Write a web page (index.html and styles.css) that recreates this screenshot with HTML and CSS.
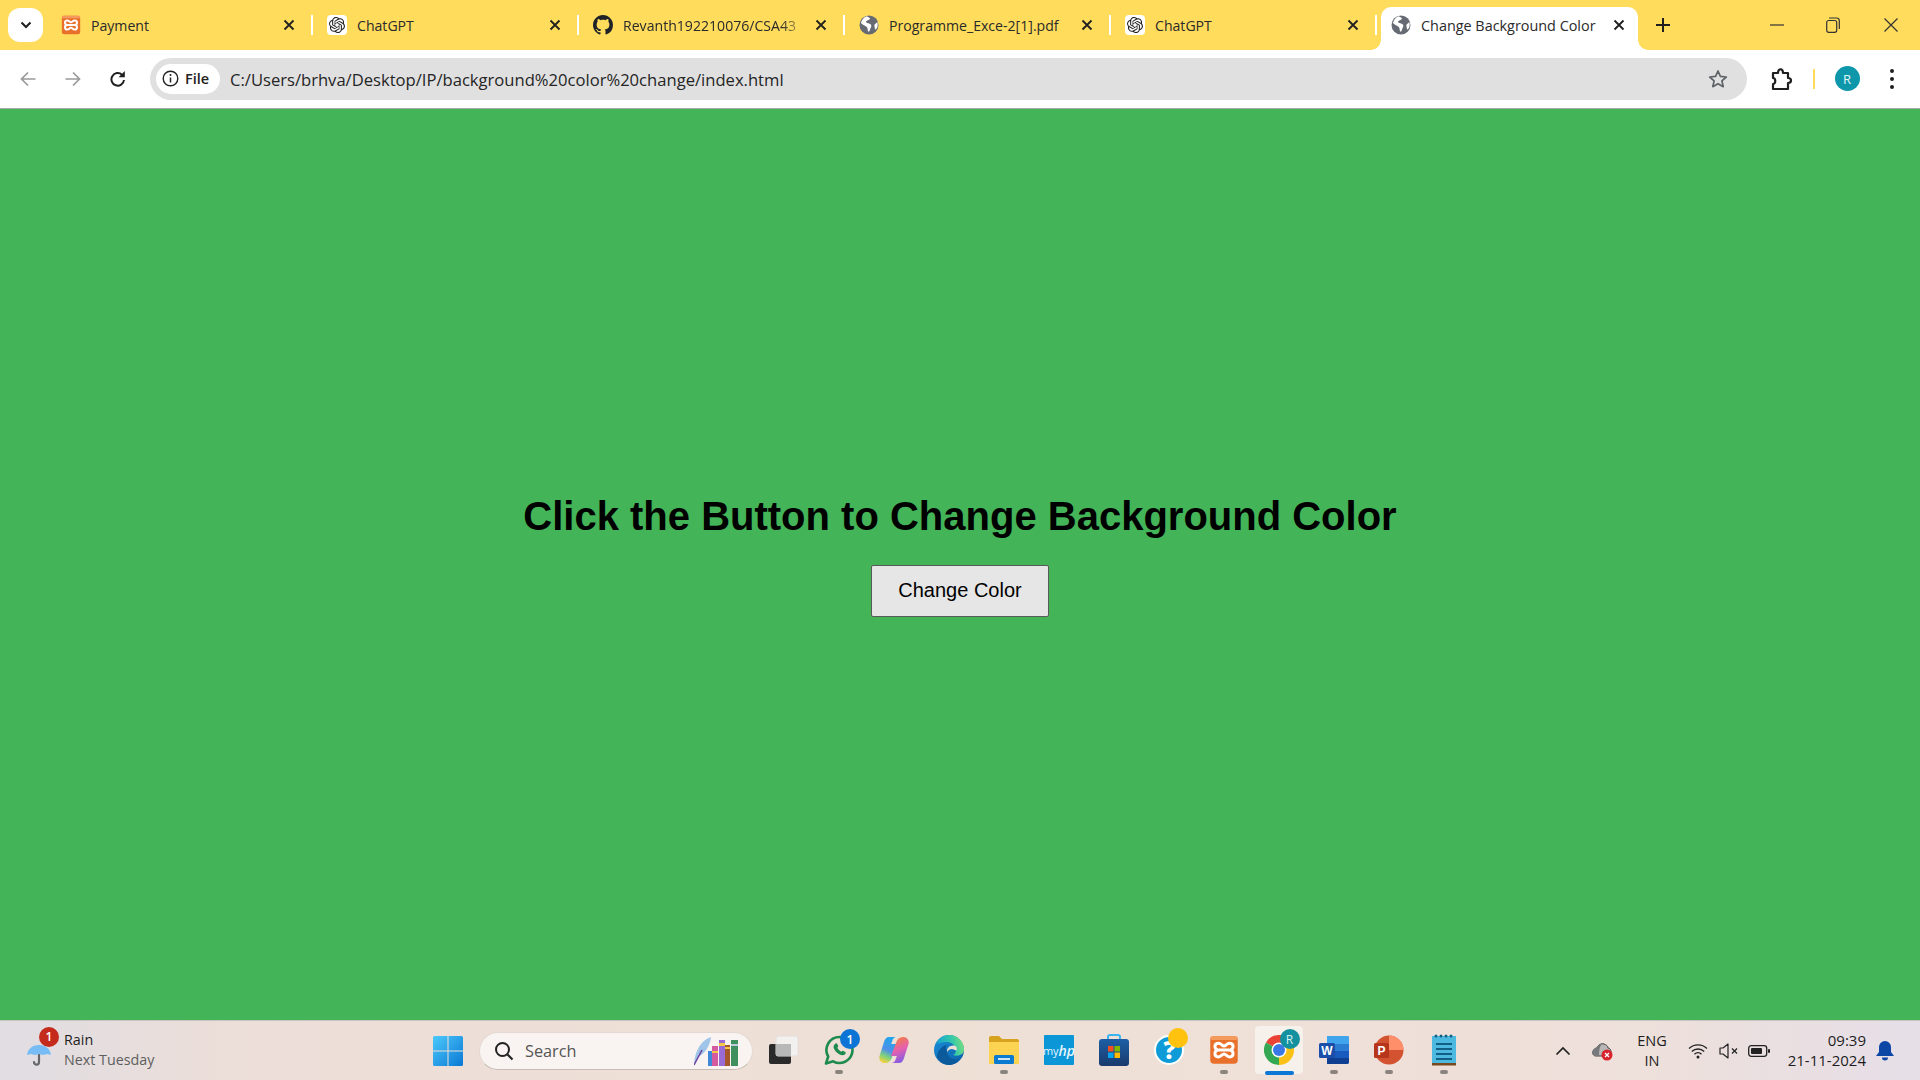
FILE: index.html
```html
<!DOCTYPE html>
<html lang="en">
<head>
<meta charset="utf-8">
<title>Change Background Color</title>
<link rel="stylesheet" href="styles.css">
</head>
<body>
<svg class="defs" width="0" height="0" aria-hidden="true">
  <defs>
    <symbol id="xampp" viewBox="0 0 24 24">
      <rect x="1" y="1" width="22" height="22" rx="3" fill="#e8702a"/>
      <rect x="1" y="1" width="22" height="3" rx="1.500" fill="#f59a5f"/>
      <path d="M7.500 6.500c-3.600 0-3.600 5-.3 5.500-3.300.5-3.300 5.500.3 5.500 2.300 0 3-2.300 4.500-2.300s2.200 2.300 4.500 2.300c3.600 0 3.600-5 .3-5.500 3.300-.5 3.300-5.500-.3-5.500-2.300 0-3 2.300-4.500 2.300s-2.200-2.300-4.500-2.300zM8 12h8" fill="none" stroke="#fff" stroke-width="2.400" stroke-linejoin="round"/>
    </symbol>
    <symbol id="openai" viewBox="0 0 24 24">
      <path fill="#222" d="M22.2819 9.8211a5.9847 5.9847 0 0 0-.5157-4.9108 6.0462 6.0462 0 0 0-6.5098-2.9A6.0651 6.0651 0 0 0 4.9807 4.1818a5.9847 5.9847 0 0 0-3.9977 2.9 6.0462 6.0462 0 0 0 .7427 7.0966 5.98 5.98 0 0 0 .511 4.9107 6.051 6.051 0 0 0 6.5146 2.9001A5.9847 5.9847 0 0 0 13.2599 24a6.0557 6.0557 0 0 0 5.7718-4.2058 5.9894 5.9894 0 0 0 3.9977-2.9001 6.0557 6.0557 0 0 0-.7475-7.0729zm-9.022 12.6081a4.4755 4.4755 0 0 1-2.8764-1.0408l.1419-.0804 4.7783-2.7582a.7948.7948 0 0 0 .3927-.6813v-6.7369l2.02 1.1686a.071.071 0 0 1 .038.052v5.5826a4.504 4.504 0 0 1-4.4945 4.4944zm-9.6607-4.1254a4.4708 4.4708 0 0 1-.5346-3.0137l.142.0852 4.783 2.7582a.7712.7712 0 0 0 .7806 0l5.8428-3.3685v2.3324a.0804.0804 0 0 1-.0332.0615L9.74 19.9502a4.4992 4.4992 0 0 1-6.1408-1.6464zM2.3408 7.8956a4.485 4.485 0 0 1 2.3655-1.9728V11.6a.7664.7664 0 0 0 .3879.6765l5.8144 3.3543-2.0201 1.1685a.0757.0757 0 0 1-.071 0l-4.8303-2.7865A4.504 4.504 0 0 1 2.3408 7.872zm16.5963 3.8558L13.1038 8.364 15.1192 7.2a.0757.0757 0 0 1 .071 0l4.8303 2.7913a4.4944 4.4944 0 0 1-.6765 8.1042v-5.6772a.79.79 0 0 0-.407-.667zm2.0107-3.0231l-.142-.0852-4.7735-2.7818a.7759.7759 0 0 0-.7854 0L9.409 9.2297V6.8974a.0662.0662 0 0 1 .0284-.0615l4.8303-2.7866a4.4992 4.4992 0 0 1 6.6802 4.66zM8.3065 12.863l-2.02-1.1638a.0804.0804 0 0 1-.038-.0567V6.0742a4.4992 4.4992 0 0 1 7.3757-3.4537l-.142.0805L8.704 5.459a.7948.7948 0 0 0-.3927.6813zm1.0976-2.3654l2.602-1.4998 2.6069 1.4998v2.9994l-2.5974 1.4997-2.6067-1.4997Z"/>
    </symbol>
    <symbol id="globe" viewBox="0 0 20 20">
      <circle cx="10" cy="10" r="9.500" fill="#666b73"/>
      <path d="M7.600 1.200c1.200 1 2.800 1 3.300 2 .5 1-1.300 1.800-2.500 2.300-1 .4-1.800 1.100-1 2 .9 1 3 .7 4.200 1.800 1.200 1.100.8 2.600 0 3.700-.7 1-.4 2.500-1.700 3.800-.8-.2-1.300-1.500-1.300-2.800 0-1.300-.6-2-1.900-2.800C5.300 10.400 3 9.500 2 8.100c.4-3 2.800-6 5.600-6.900zM15.700 9.300c1-.7 2-1.700 2.600-2.400.5 1.700.7 3.600-.2 5.800-.5.800-1.200 1.700-1.800 1.900-.8-1.500-1.100-4.100-.6-5.300z" fill="#fff"/>
    </symbol>
    <symbol id="close" viewBox="0 0 12 12">
      <path d="M1.500 1.500l9 9M10.500 1.500l-9 9" stroke="#1f1f1f" stroke-width="1.800" fill="none"/>
    </symbol>
    <linearGradient id="edgeA" x1="0" y1="0" x2="1" y2="1"><stop offset="0" stop-color="#1a8fd8"/><stop offset="1" stop-color="#0b5fa8"/></linearGradient>
    <linearGradient id="edgeB" x1="0" y1=".5" x2="1" y2=".3"><stop offset="0" stop-color="#14a0d8"/><stop offset=".6" stop-color="#35c8a8"/><stop offset="1" stop-color="#7fe07a"/></linearGradient>
    <linearGradient id="win" x1="0" y1="0" x2="1" y2="1"><stop offset="0" stop-color="#4cc9fb"/><stop offset="1" stop-color="#0a78d4"/></linearGradient>
    <linearGradient id="copA" x1=".6" y1="0" x2=".3" y2="1"><stop offset="0" stop-color="#1ea7ee"/><stop offset=".5" stop-color="#4f8fe8"/><stop offset=".75" stop-color="#7ed27c"/><stop offset="1" stop-color="#f7d23e"/></linearGradient>
    <linearGradient id="copB" x1=".6" y1="1" x2=".3" y2="0"><stop offset="0" stop-color="#7a5be6"/><stop offset=".5" stop-color="#e45fb0"/><stop offset="1" stop-color="#f5803e"/></linearGradient>
    <linearGradient id="storeBg" x1="0" y1="0" x2="0" y2="1"><stop offset="0" stop-color="#1d5fa6"/><stop offset="1" stop-color="#1a3a6c"/></linearGradient>
  </defs>
</svg>

<header class="tabstrip">
  <button class="tabsearch" type="button" aria-label="Search tabs">
    <svg width="12" height="8" viewBox="0 0 12 8"><path d="M1.500 1.500L6 6l4.500-4.500" stroke="#1f1f1f" stroke-width="2" fill="none"/></svg>
  </button>
  <div class="tab">
    <svg class="favicon"><use href="#xampp"/></svg>
    <span class="tab-title">Payment</span>
    <svg class="tab-close"><use href="#close"/></svg>
  </div>
  <div class="tab">
    <span class="favicon favicon-white"><svg width="16" height="16"><use href="#openai"/></svg></span>
    <span class="tab-title">ChatGPT</span>
    <svg class="tab-close"><use href="#close"/></svg>
  </div>
  <div class="tab">
    <svg class="favicon" viewBox="0 0 16 16"><path fill="#1f2328" d="M8 0C3.580 0 0 3.580 0 8c0 3.540 2.290 6.530 5.470 7.590.4.070.55-.17.55-.38 0-.19-.01-.82-.01-1.490-2.010.37-2.530-.49-2.690-.94-.09-.23-.48-.94-.82-1.130-.28-.15-.68-.52-.01-.53.63-.01 1.080.58 1.230.82.72 1.210 1.870.87 2.330.66.07-.52.28-.87.51-1.070-1.780-.2-3.640-.89-3.640-3.950 0-.87.31-1.590.82-2.150-.08-.2-.36-1.020.08-2.120 0 0 .67-.21 2.200.82.64-.18 1.320-.27 2-.27.68 0 1.360.09 2 .27 1.530-1.040 2.200-.82 2.200-.82.44 1.100.16 1.920.08 2.120.51.56.82 1.270.82 2.150 0 3.070-1.870 3.750-3.650 3.950.29.25.54.73.54 1.480 0 1.070-.01 1.930-.01 2.200 0 .21.15.46.55.38A8.013 8.013 0 0016 8c0-4.420-3.580-8-8-8z"/></svg>
    <span class="tab-title tab-title-fade">Revanth192210076/CSA43</span>
    <svg class="tab-close"><use href="#close"/></svg>
  </div>
  <div class="tab">
    <svg class="favicon"><use href="#globe"/></svg>
    <span class="tab-title">Programme_Exce-2[1].pdf</span>
    <svg class="tab-close"><use href="#close"/></svg>
  </div>
  <div class="tab">
    <span class="favicon favicon-white"><svg width="16" height="16"><use href="#openai"/></svg></span>
    <span class="tab-title">ChatGPT</span>
    <svg class="tab-close"><use href="#close"/></svg>
  </div>
  <div class="tab tab-active">
    <svg class="favicon"><use href="#globe"/></svg>
    <span class="tab-title">Change Background Color</span>
    <svg class="tab-close"><use href="#close"/></svg>
  </div>
  <button class="newtab" type="button" aria-label="New tab">
    <svg width="14" height="14" viewBox="0 0 14 14"><path d="M7 0v14M0 7h14" stroke="#1f1f1f" stroke-width="2"/></svg>
  </button>
  <div class="window-controls">
    <span class="wc"><svg width="14" height="14" viewBox="0 0 14 14"><path d="M0 7h14" stroke="#333" stroke-width="1.200"/></svg></span>
    <span class="wc"><svg width="14" height="16" viewBox="0 0 14 16"><rect x=".7" y="3.500" width="10" height="11.800" rx="2" fill="none" stroke="#333" stroke-width="1.200"/><path d="M3 1h7.500A2.800 2.800 0 0 1 13.300 3.800V12" fill="none" stroke="#333" stroke-width="1.200"/></svg></span>
    <span class="wc wc-close"><svg width="14" height="14" viewBox="0 0 14 14"><path d="M.5.5l13 13M13.500.5l-13 13" stroke="#333" stroke-width="1.200"/></svg></span>
  </div>
</header>

<nav class="toolbar">
  <span class="navbtn"><svg width="16" height="16" viewBox="0 0 16 16"><path d="M15.500 8H1.500M8 1.500L1.500 8 8 14.500" stroke="#9a9a9a" stroke-width="1.700" fill="none"/></svg></span>
  <span class="navbtn"><svg width="16" height="16" viewBox="0 0 16 16"><path d="M.5 8h14M8 1.500L14.500 8 8 14.500" stroke="#9a9a9a" stroke-width="1.700" fill="none"/></svg></span>
  <span class="navbtn"><svg width="16" height="18" viewBox="0 0 16 18"><path d="M14 10a6.300 6.300 0 1 1-2-5.300" stroke="#1f1f1f" stroke-width="2" fill="none"/><path d="M14.800 1v6.200H8.600z" fill="#1f1f1f"/></svg></span>
  <div class="omnibox">
    <span class="chip">
      <svg width="17" height="17" viewBox="0 0 17 17"><circle cx="8.500" cy="8.500" r="7.300" fill="none" stroke="#222" stroke-width="1.400"/><path d="M8.500 7.500v5" stroke="#222" stroke-width="1.500"/><circle cx="8.500" cy="5" r="1" fill="#222"/></svg>
      File
    </span>
    <span class="url">C:/Users/brhva/Desktop/IP/background%20color%20change/index.html</span>
    <svg class="star" width="20" height="20" viewBox="0 0 20 20"><path d="M10 2l2.400 5.400 5.900.6-4.400 3.900 1.300 5.800L10 14.700l-5.200 3 1.300-5.800L1.700 8l5.900-.6z" fill="none" stroke="#5f6368" stroke-width="1.700" stroke-linejoin="round"/></svg>
  </div>
  <span class="ext">
    <svg width="22" height="24" viewBox="0 0 22 24"><path d="M2 6h5c0-5 5-5 5 0h5v5c4 0 4 5 0 5v6H2v-5c3 0 3-6 0-6z" fill="none" stroke="#1f1f1f" stroke-width="2.200" stroke-linejoin="round"/></svg>
  </span>
  <span class="toolbar-sep"></span>
  <span class="avatar-slot"><span class="avatar">R</span></span>
  <span class="menu-slot"><i class="dot"></i><i class="dot"></i><i class="dot"></i></span>
</nav>

<main class="page">
  <h1 class="heading">Click the Button to Change Background Color</h1>
  <button class="change-btn" type="button">Change Color</button>
</main>

<footer class="taskbar">
  <div class="weather">
    <span class="weather-icon">
      <svg width="26" height="30" viewBox="0 0 26 30"><path d="M13 8v16c0 3.500-5 3.500-5 0" fill="none" stroke="#66676b" stroke-width="2.200" stroke-linecap="round"/><path d="M1 17C2 10 7 7 13 7s11 3 12 10l-4-1-4 1-4-1-4 1-4-1z" fill="#78bcf6"/></svg>
      <span class="badge badge-red">1</span>
    </span>
    <span class="weather-text">
      <span class="weather-main">Rain</span>
      <span class="weather-sub">Next Tuesday</span>
    </span>
  </div>

  <span class="start">
    <svg width="30" height="30" viewBox="0 0 30 30"><path fill="url(#win)" d="M0 1.500A1.500 1.500 0 0 1 1.500 0h13v14.500H0zM15.500 0h13A1.500 1.500 0 0 1 30 1.500v13H15.500zM0 15.500h14.500V30h-13A1.500 1.500 0 0 1 0 28.500zM15.500 15.500H30v13a1.500 1.500 0 0 1-1.500 1.500h-13z"/></svg>
  </span>

  <div class="search">
    <svg width="20" height="20" viewBox="0 0 20 20"><circle cx="8.500" cy="8.500" r="6.500" fill="none" stroke="#222" stroke-width="2"/><path d="M13.500 13.500L18.500 18.500" stroke="#222" stroke-width="2.200"/></svg>
    <span class="search-label">Search</span>
    <svg class="search-art" width="46" height="30" viewBox="0 0 46 30">
      <path d="M0 28C1 15 7 4 17 1c-1 8-5 16-13 20z" fill="#9fc5e8"/><path d="M0 29L8 14" stroke="#6b3fa0" stroke-width="1.500"/>
      <rect x="14" y="15" width="4" height="15" fill="#3f87d8"/><rect x="18" y="10" width="6" height="20" fill="#d65aa0"/><rect x="18" y="15" width="6" height="2" fill="#f2c744"/>
      <rect x="25" y="4" width="6" height="26" fill="#9a6bd6"/><rect x="25" y="7" width="6" height="3" fill="#f2c744"/>
      <rect x="31" y="9" width="5" height="21" fill="#a5562b"/><rect x="31" y="11" width="5" height="2" fill="#f2c744"/>
      <rect x="37" y="4" width="7" height="26" fill="#3f8f5f"/><rect x="37" y="8" width="7" height="2" fill="#bcd"/>
    </svg>
  </div>

  <div class="apps">
    <span class="app">
      <svg width="32" height="30" viewBox="0 0 32 30"><rect x="1" y="9" width="22" height="20" rx="2" fill="#2a2a2a"/><rect x="8" y="1" width="22" height="20" rx="2" fill="#f3f1ef" stroke="#e2dedb"/><rect x="8" y="9" width="15" height="12" fill="#b8b8b8"/></svg>
    </span>
    <span class="app has-dot">
      <svg width="31" height="30" viewBox="0 0 31 30"><path d="M15.500 2a13 13 0 0 1 0 26c-2.300 0-4.500-.6-6.300-1.700L2 28.500l2.200-7A13 13 0 0 1 15.500 2z" fill="none" stroke="#1d8a4e" stroke-width="2.600" stroke-linejoin="round"/><path d="M11 9c1-1 2-.8 2.400.3l.7 1.700c.2.600 0 1-.7 1.800.7 1.700 2.300 3.200 4 4 .8-.9 1.200-1.100 1.800-.9l1.700.9c1 .5 1.100 1.400.2 2.400-1.300 1.400-3.500 1.300-6 0-2.300-1.200-4.200-3.300-5.100-5.400-.8-2-.5-3.500 1-4.800z" fill="#1d8a4e"/></svg>
      <span class="badge badge-blue">1</span>
      <i class="run-dot"></i>
    </span>
    <span class="app">
      <svg width="30" height="28" viewBox="0 0 30 28"><path d="M10 1h7.500c-2 0-3.500 1.500-4.300 4L12.200 8H18l-5 13c-1 4-3.500 6-7 6-4 0-6.500-3-5.500-7L5 6c.8-3 2.500-5 5-5z" fill="url(#copA)"/><path d="M20 27h-7.500c2 0 3.500-1.500 4.300-4l1-3H12l5-13c1-4 3.500-6 7-6 4 0 6.500 3 5.500 7L25 22c-.8 3-2.500 5-5 5z" fill="url(#copB)"/></svg>
    </span>
    <span class="app">
      <svg width="32" height="32" viewBox="0 0 32 32"><circle cx="16" cy="16" r="15" fill="url(#edgeA)"/><path d="M3 10C6 4 11 1 16 1c9 0 15 7 15 14 0 3-1 5-4 6-2 1-5 1-7 0 2-1 3-3 3-5 0-4-4-8-9-8-4 0-8 1-11 2z" fill="url(#edgeB)"/><path d="M14 18c-.5-4 3-7 7-6.500 2.500.4 3.500 2.500 2.500 5-1.500 0-3-1.500-4.500-1.500-2 0-4 1-5 3z" fill="#efe0d6"/><path d="M14 18c.5 5 6 9 13 7-3 4-7 6-11 6-5 0-10-3-12-8 0-5 4-11 10-12-2 2-.5 4.500 0 7z" fill="#0b5a9c"/></svg>
    </span>
    <span class="app has-dot">
      <svg width="30" height="30" viewBox="0 0 30 30"><path d="M0 3a2 2 0 0 1 2-2h8l3 3h15a2 2 0 0 1 2 2v4H0z" fill="#d7a21d"/><path d="M0 7h30v21a1 1 0 0 1-1 1H1a1 1 0 0 1-1-1z" fill="#fdd352"/><rect x="5" y="20" width="20" height="9" rx="1.500" fill="#0a7bd0"/><rect x="9" y="23" width="12" height="2" fill="#c8e4f8"/></svg>
      <i class="run-dot"></i>
    </span>
    <span class="app">
      <span class="myhp">my<em>hp</em></span>
    </span>
    <span class="app">
      <svg width="30" height="32" viewBox="0 0 30 32"><path d="M9 6V3a2 2 0 0 1 2-2h8a2 2 0 0 1 2 2v3" fill="none" stroke="#3ab4ee" stroke-width="2"/><rect y="5" width="30" height="27" rx="3" fill="url(#storeBg)"/><rect x="9" y="12" width="5.500" height="5.500" fill="#f25022"/><rect x="15.500" y="12" width="5.500" height="5.500" fill="#7fba00"/><rect x="9" y="18.500" width="5.500" height="5.500" fill="#00a4ef"/><rect x="15.500" y="18.500" width="5.500" height="5.500" fill="#ffb900"/></svg>
    </span>
    <span class="app">
      <svg width="30" height="30" viewBox="0 0 30 30"><circle cx="15" cy="15" r="14" fill="#0f9bd7" stroke="#fff" stroke-width="2"/></svg>
      <span class="help-mark">?</span>
      <i class="yellow-dot"></i>
    </span>
    <span class="app has-dot">
      <svg width="30" height="30"><use href="#xampp"/></svg>
      <i class="run-dot"></i>
    </span>
    <span class="app app-active">
      <svg width="30" height="30" viewBox="0 0 30 30">
        <path d="M15 15L2 7.500A15 15 0 0 1 28 7.500z" fill="#ea4335"/>
        <path d="M15 15l13-7.500A15 15 0 0 1 15 30z" fill="#fbc116"/>
        <path d="M15 15v15A15 15 0 0 1 2 7.500z" fill="#34a853"/>
        <circle cx="15" cy="15" r="7.500" fill="#fff"/><circle cx="15" cy="15" r="6" fill="#3b78e7"/>
      </svg>
      <span class="profile-badge">R</span>
      <i class="active-bar"></i>
    </span>
    <span class="app has-dot">
      <svg width="30" height="30" viewBox="0 0 30 30"><path d="M8 1h20a2 2 0 0 1 2 2v24a2 2 0 0 1-2 2H8z" fill="#2b7cd3"/><path d="M8 1h20a2 2 0 0 1 2 2v6H8z" fill="#41a5ee"/><path d="M8 16h22v7H8z" fill="#185abd"/><path d="M8 23h22v4a2 2 0 0 1-2 2H8z" fill="#103f91"/><rect y="8" width="16" height="15" rx="1.500" fill="#1a4ea8"/><text class="word-w" x="8" y="20" text-anchor="middle">W</text></svg>
      <i class="run-dot"></i>
    </span>
    <span class="app has-dot">
      <svg width="30" height="30" viewBox="0 0 30 30"><circle cx="15" cy="15" r="14.500" fill="#d35230"/><path d="M15 .5A14.500 14.500 0 0 1 29.500 15H15z" fill="#ff8f6b"/><rect y="8" width="15" height="15" rx="1.500" fill="#b7351b"/><text class="word-w" x="7.500" y="20" text-anchor="middle">P</text></svg>
      <i class="run-dot"></i>
    </span>
    <span class="app has-dot">
      <svg width="24" height="32" viewBox="0 0 24 32"><rect y="2" width="24" height="28" fill="#4db8e0"/><rect y="29" width="24" height="2.500" fill="#7a4a1f"/><g fill="#125f86"><circle cx="4" cy="2" r="1.500"/><circle cx="9" cy="2" r="1.500"/><circle cx="14" cy="2" r="1.500"/><circle cx="19" cy="2" r="1.500"/><rect x="4" y="9" width="16" height="2"/><rect x="4" y="14" width="16" height="2"/><rect x="4" y="19" width="16" height="2"/><rect x="4" y="24" width="16" height="2"/></g></svg>
      <i class="run-dot"></i>
    </span>
  </div>

  <div class="tray">
    <span class="tray-slot tray-caret"><svg width="16" height="10" viewBox="0 0 16 10"><path d="M1.500 8.500L8 2l6.500 6.500" fill="none" stroke="#222" stroke-width="1.700"/></svg></span>
    <span class="tray-slot tray-cloud"><svg width="22" height="20" viewBox="0 0 22 20"><path d="M4 15C1 15 0 12 1 10c1-2 2-3 4-3 1-3 4-5 7-4 2 .6 4 2 4 4 2 0 3 2 3 4 0 3-2 4-4 4z" fill="#b9b7b6" stroke="#444" stroke-width="1"/><path d="M4 15C1 15 0 12 1 10c1-2 2-3 4-3 1-2 3-4 5-4-2 2-3 5-3 12z" fill="#77797d"/><circle cx="15" cy="14" r="5.500" fill="#d8232f"/><path d="M13 12l4 4M17 12l-4 4" stroke="#fff" stroke-width="1.300"/></svg></span>
    <span class="tray-slot tray-lang"><span>ENG</span><span>IN</span></span>
    <span class="tray-slot tray-wifi"><svg width="20" height="16" viewBox="0 0 20 16"><path d="M1 5.500a13 13 0 0 1 18 0M3.800 8.500a9 9 0 0 1 12.400 0M6.500 11.200a5 5 0 0 1 7 0" fill="none" stroke="#222" stroke-width="1.300"/><circle cx="10" cy="14" r="1.500" fill="#222"/></svg></span>
    <span class="tray-slot tray-sound"><svg width="20" height="16" viewBox="0 0 20 16"><path d="M1 5h3l5-4v14l-5-4H1z" fill="none" stroke="#222" stroke-width="1.200" stroke-linejoin="round"/><path d="M13 5.500l5 5M18 5.500l-5 5" stroke="#222" stroke-width="1.200"/></svg></span>
    <span class="tray-slot tray-battery"><svg width="22" height="14" viewBox="0 0 22 14"><rect x=".7" y="1.700" width="18" height="10.600" rx="2.500" fill="none" stroke="#222" stroke-width="1.300"/><rect x="3" y="4" width="11" height="6" rx="1" fill="#222"/><rect x="20" y="5" width="2" height="4" rx="1" fill="#222"/></svg></span>
    <span class="tray-clock"><span>09:39</span><span>21-11-2024</span></span>
    <span class="tray-slot tray-bell"><svg width="18" height="20" viewBox="0 0 18 20"><path d="M9 0a6 6 0 0 1 6 6v5l3 4H0l3-4V6a6 6 0 0 1 6-6zM6 16.500h6a3 3 0 0 1-6 0z" fill="#0c47a5"/></svg></span>
  </div>
</footer>
</body>
</html>
```

FILE: styles.css
```css
* { box-sizing: border-box; }
html, body { margin: 0; padding: 0; }
body {
  width: 1920px;
  height: 1080px;
  overflow: hidden;
  display: flex;
  flex-direction: column;
  font-family: "Open Sans", "Noto Sans", sans-serif;
  background: #43b458;
}
.defs { position: absolute; }
button { font: inherit; }

/* tab strip */
.tabstrip {
  height: 50px;
  flex: none;
  display: flex;
  background: #ffdc5c;
  padding-left: 8px;
}
.tabsearch {
  width: 35px;
  height: 34px;
  margin-top: 8px;
  margin-right: 3px;
  border: 0;
  border-radius: 12px;
  background: #fff;
  display: flex;
  align-items: center;
  justify-content: center;
  padding: 0;
}
.tab {
  width: 266px;
  height: 50px;
  display: flex;
  align-items: center;
  padding-left: 15px;
  position: relative;
  font-size: 14.100px;
  color: #2a2a2a;
}
.tab::after {
  content: "";
  position: absolute;
  right: -1px;
  top: 15px;
  width: 2px;
  height: 20px;
  background: #fff;
}
.favicon { width: 20px; height: 20px; flex: none; }
.favicon-white {
  background: #fff;
  border-radius: 4px;
  display: flex;
  align-items: center;
  justify-content: center;
}
.tab-title {
  margin-left: 10px;
  width: 186px;
  white-space: nowrap;
  overflow: hidden;
  flex: none;
}
.tab-title-fade {
  -webkit-mask-image: linear-gradient(90deg, #000 85%, transparent 99%);
  mask-image: linear-gradient(90deg, #000 85%, transparent 99%);
}
.tab-close { width: 12px; height: 12px; margin-left: 6px; flex: none; }
.tab-active {
  width: 257px;
  height: 43px;
  margin-top: 7px;
  margin-left: 5px;
  padding-left: 10px;
  padding-bottom: 7px;
  background: #fff;
  border-radius: 10px 10px 0 0;
  font-size: 14.400px;
}
.tab-active::after,
.tab-active::before {
  content: "";
  position: absolute;
  bottom: 0;
  top: auto;
  width: 10px;
  height: 10px;
  background: radial-gradient(circle at 0 0, #ffdc5c 9.500px, #fff 10px);
}
.tab-active::before { left: -10px; }
.tab-active::after {
  right: -10px;
  background: radial-gradient(circle at 100% 0, #ffdc5c 9.500px, #fff 10px);
}
.tab-active .tab-title { width: 178px; margin-left: 10px; }
.tab-active .tab-close { margin-left: 14px; }
.newtab {
  width: 50px;
  height: 50px;
  border: 0;
  background: none;
  padding: 0;
  display: flex;
  align-items: center;
  justify-content: center;
}
.window-controls { margin-left: auto; display: flex; }
.wc {
  width: 56px;
  height: 50px;
  display: flex;
  align-items: center;
  justify-content: center;
}
.wc-close { width: 59px; }

/* toolbar */
.toolbar {
  height: 59px;
  flex: none;
  display: flex;
  align-items: center;
  background: #fff;
  border-bottom: 1px solid #a9a9a9;
  padding: 0 15px 1px 5px;
}
.navbtn {
  width: 45px;
  height: 40px;
  display: flex;
  align-items: center;
  justify-content: center;
}
.omnibox {
  flex: 1;
  height: 42px;
  margin-left: 10px;
  border-radius: 21px;
  background: #e0e0e0;
  display: flex;
  align-items: center;
  padding: 0 16px 0 6px;
}
.chip {
  width: 64px;
  height: 30px;
  border-radius: 15px;
  background: #fff;
  display: flex;
  align-items: center;
  padding-left: 6px;
  gap: 6px;
  font-size: 14.500px;
  font-weight: 600;
  color: #222;
}
.url {
  margin-left: 10px;
  padding-top: 2px;
  font-size: 16.600px;
  color: #252525;
  white-space: nowrap;
}
.star { margin-left: auto; margin-right: 3.500px; }
.ext {
  width: 68px;
  padding-left: 2px;
  display: flex;
  justify-content: center;
}
.toolbar-sep { width: 2px; height: 20px; margin-left: -2px; background: #ffdc5c; }
.avatar-slot { width: 64px; display: flex; justify-content: center; }
.avatar {
  width: 25px;
  height: 25px;
  border-radius: 50%;
  background: #0e97aa;
  color: #e4f6f8;
  font-size: 13px;
  display: flex;
  align-items: center;
  justify-content: center;
}
.menu-slot {
  width: 26px;
  display: flex;
  flex-direction: column;
  align-items: center;
  gap: 4px;
}
.dot { width: 4px; height: 4px; border-radius: 50%; background: #1f1f1f; }

/* page */
.page {
  flex: 1;
  display: flex;
  flex-direction: column;
  align-items: center;
  justify-content: center;
  padding-bottom: 20px;
  background: #43b458;
  font-family: "Liberation Sans", Arial, sans-serif;
}
.heading {
  margin: 0 0 26px;
  font-size: 40px;
  line-height: 46px;
  font-weight: 700;
  color: #000;
}
.change-btn {
  width: 178px;
  height: 52px;
  padding: 0;
  font-family: "Liberation Sans", Arial, sans-serif;
  font-size: 20px;
  color: #000;
  background: #e6e6e6;
  border: 1px solid #5a5a5a;
  border-radius: 2px;
}

/* taskbar */
.taskbar {
  height: 60px;
  flex: none;
  display: flex;
  align-items: center;
  border-top: 1px solid #c9c4bf;
  background: linear-gradient(90deg, #e0dde3 0, #ecded8 12%, #efe0d6 50%, #eee0da 85%, #e6dfe8 100%);
  color: #1d1d1d;
}
.weather {
  width: 420px;
  padding-left: 26px;
  display: flex;
  align-items: center;
  gap: 12px;
}
.weather-icon { width: 26px; height: 30px; position: relative; display: block; margin-top: 4px; }
.weather-text { display: flex; flex-direction: column; margin-top: -2px; font-size: 14.300px; line-height: 20px; }
.weather-sub { color: #5e5e5e; }
.badge {
  position: absolute;
  width: 20px;
  height: 20px;
  border-radius: 50%;
  color: #fff;
  font-size: 12px;
  font-weight: 600;
  display: flex;
  align-items: center;
  justify-content: center;
}
.badge-red { background: #c42b1c; right: -7px; top: -11px; }
.badge-blue { background: #0c74d4; left: 28.500px; top: 8px; }
.start {
  width: 55px;
  display: flex;
  justify-content: center;
}
.search {
  width: 274px;
  height: 38px;
  margin-left: 4px;
  border-radius: 19px;
  background: #f9f4f1;
  border: 1px solid #e3d9d2;
  border-bottom-color: #c8bdb6;
  display: flex;
  align-items: center;
  padding-left: 14px;
}
.search-label { margin-left: 11px; font-size: 16.300px; color: #555; }
.search-art { margin-left: auto; margin-right: 12px; }
.apps { margin-left: 3.500px; display: flex; }
.app {
  width: 55px;
  height: 59px;
  position: relative;
  display: flex;
  align-items: center;
  justify-content: center;
  padding-bottom: 1px;
}
.run-dot {
  position: absolute;
  left: 23.500px;
  bottom: 6px;
  width: 8px;
  height: 4px;
  border-radius: 2px;
  background: #8a837e;
}
.myhp {
  width: 30px;
  height: 30px;
  border-radius: 1px;
  background: #0b96d8;
  color: #e6f5fc;
  font-size: 11px;
  display: flex;
  align-items: center;
  justify-content: center;
}
.myhp em { font-size: 14px; font-weight: 600; }
.help-mark {
  position: absolute;
  left: 20px;
  top: 12px;
  width: 16px;
  color: #fff;
  font-size: 24px;
  font-weight: 800;
  line-height: 34px;
  text-align: center;
}
.yellow-dot {
  position: absolute;
  left: 26px;
  top: 7px;
  width: 20px;
  height: 20px;
  border-radius: 50%;
  background: #ffc20e;
}
.app-active::before {
  content: "";
  position: absolute;
  left: 3.500px;
  top: 5px;
  width: 48px;
  height: 48px;
  border-radius: 4px;
  background: #f7f1ec;
}
.app-active > svg { position: relative; }
.profile-badge {
  position: absolute;
  left: 28px;
  top: 8px;
  width: 20px;
  height: 20px;
  border-radius: 50%;
  background: #14919f;
  color: #d5f0f3;
  font-size: 12px;
  display: flex;
  align-items: center;
  justify-content: center;
}
.active-bar {
  position: absolute;
  left: 13px;
  bottom: 5px;
  width: 29px;
  height: 4px;
  border-radius: 2px;
  background: #0a78d4;
}
.word-w { font: 700 12px "Liberation Sans", sans-serif; fill: #fff; }
.tray { margin-left: auto; padding-right: 16px; display: flex; align-items: center; }
.tray-slot { display: flex; align-items: center; justify-content: center; }
.tray-caret { width: 40px; }
.tray-cloud { width: 40px; }
.tray-lang {
  width: 58px;
  flex-direction: column;
  font-size: 14.500px;
  line-height: 20px;
}
.tray-wifi { width: 34px; }
.tray-sound { width: 28px; }
.tray-battery { width: 32px; }
.tray-clock {
  width: 91px;
  display: flex;
  flex-direction: column;
  align-items: flex-end;
  margin-top: -2px;
  font-size: 15px;
  line-height: 20px;
}
.tray-bell { width: 38px; }
```
